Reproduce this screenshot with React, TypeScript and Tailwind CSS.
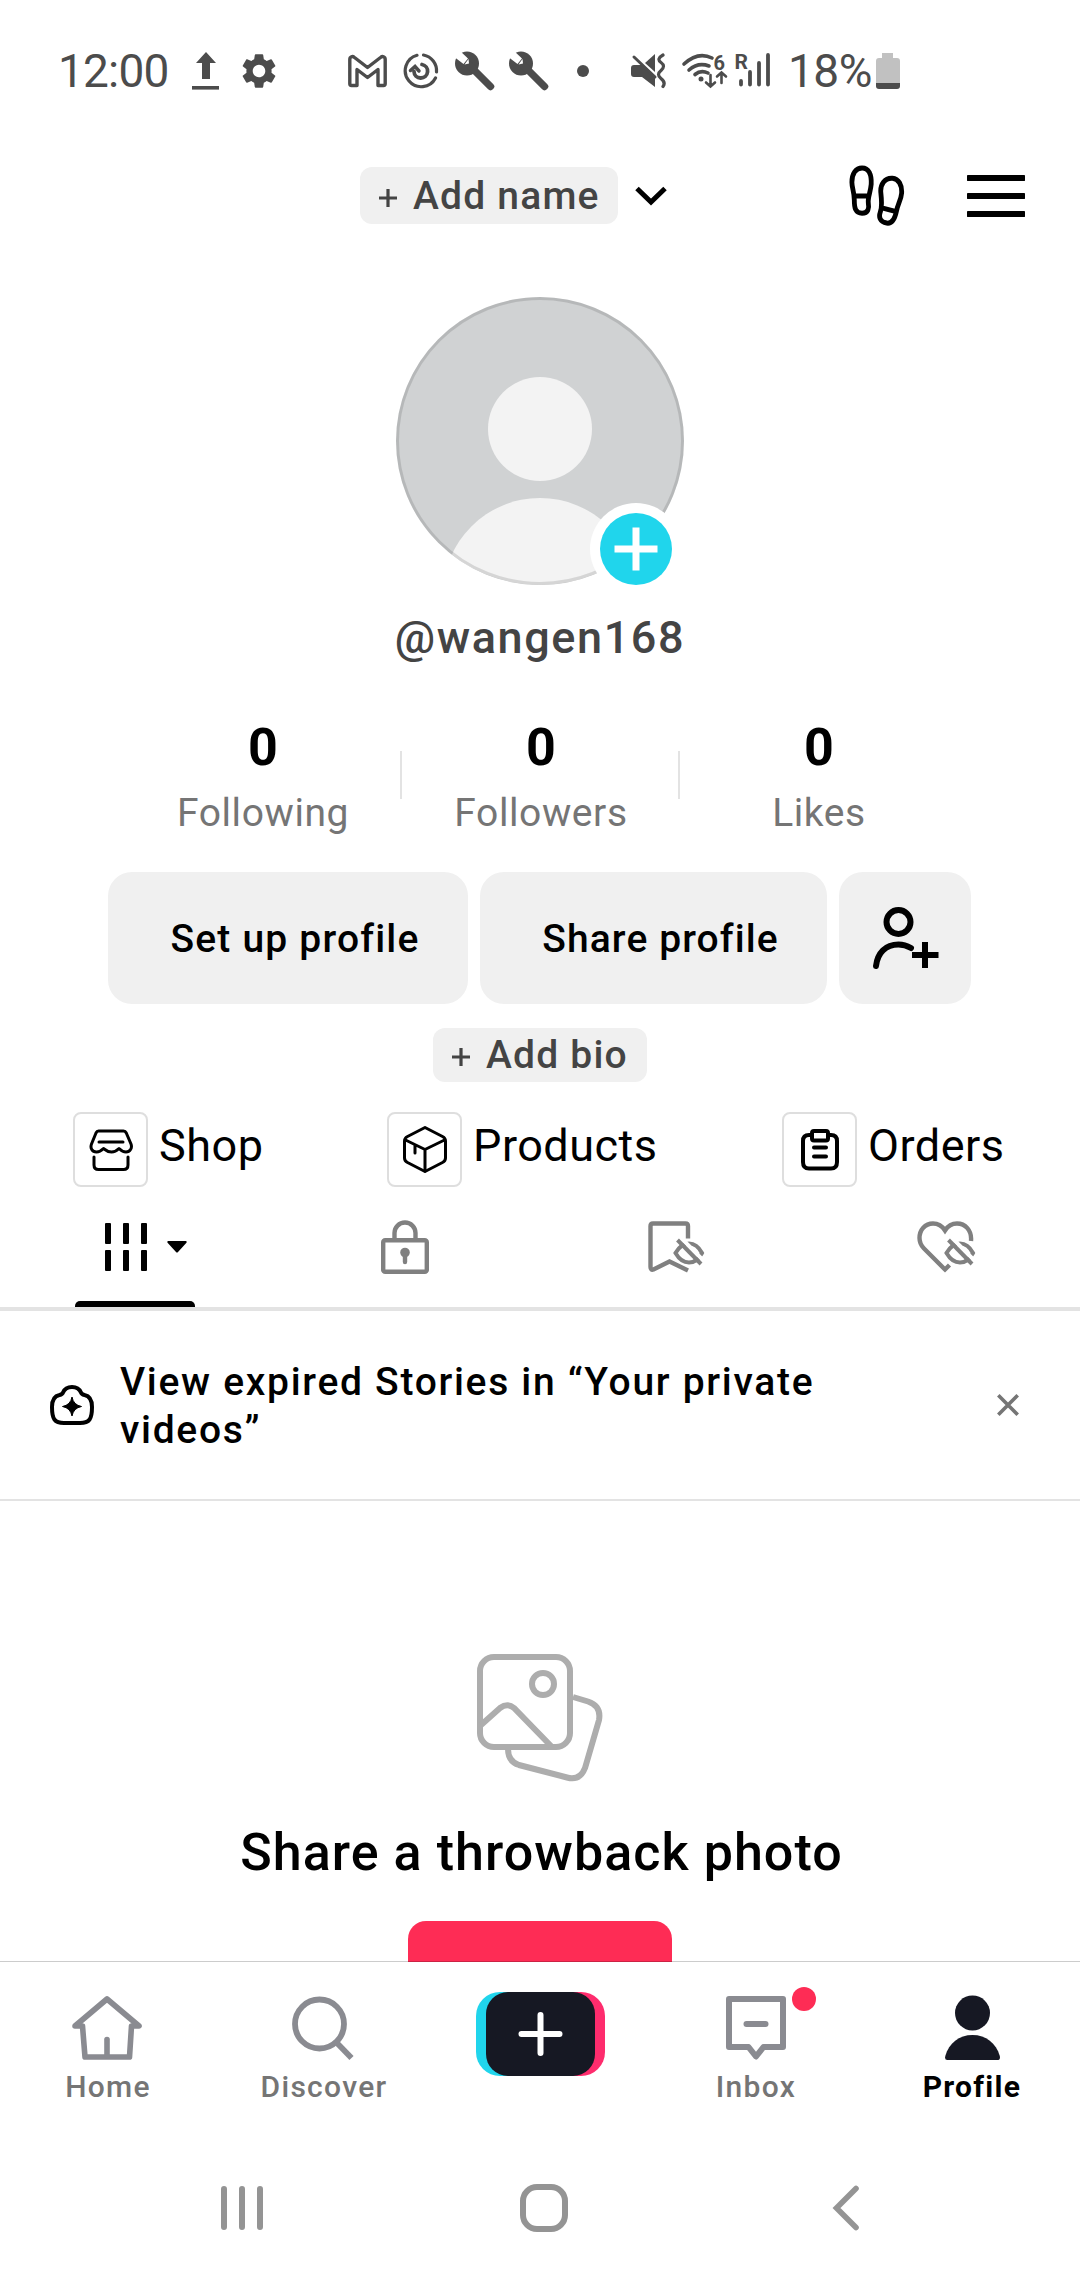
import type { ReactNode } from "react";
import { MdSettings } from "react-icons/md";

function WrenchIcon() {
  return (
    <svg width="40" height="40" viewBox="0 0 40 40">
      <circle cx="12" cy="12.5" r="12" fill="#4c4c4c" />
      <path d="M14 14 35.5 35.5" stroke="#4c4c4c" strokeWidth="7.4" strokeLinecap="round" />
      <path d="M-2 5 4 -1 13 7.5 8.5 13Z" fill="#fff" />
      <path d="M13.5 8 14 12.5 9.5 13.5Z" fill="#fff" />
    </svg>
  );
}

function StatusBar() {
  return (
    <div className="flex h-[141px] shrink-0 items-center pl-[58px] text-[46px] text-[#4c4c4c]">
      <span className="w-[134px] pt-px tracking-[-0.8px]">12:00</span>
      <svg width="28" height="38" viewBox="0 0 28 38" fill="#4c4c4c">
        <path d="M14 0 24 11H18V27H10V11H4Z" />
        <path d="M0 34h27v3.6H0z" />
      </svg>
      <MdSettings className="ml-[18px] size-[42px]" />
      <svg className="ml-[68px]" width="40" height="34" viewBox="0 0 40 34">
        <path
          d="M3.5 31.5c-1 0-1.7-.7-1.7-1.7V5.5C1.8 2.5 4.5 1.8 6.5 3.500L19.500 13.500 32.500 3.500c2-1.700 4.700-1 4.700 2v24.300c0 1-.7 1.700-1.700 1.700H30V15.500L19.500 23.500 9 15.500V31.500Z"
          fill="none"
          stroke="#4c4c4c"
          strokeWidth="3.400"
          strokeLinejoin="round"
        />
      </svg>
      <svg
        className="ml-[14px]"
        width="38"
        height="38"
        viewBox="0 0 38 38"
        fill="none"
        stroke="#4c4c4c"
        strokeWidth="3.200"
        strokeLinecap="round"
      >
        <path d="M15 3.300A16 16 0 1 0 33.500 26" />
        <path d="M21.500 3A16 16 0 0 1 34.500 20" />
        <path d="M20 12.500A6.800 6.800 0 1 1 12 19.500" strokeWidth="3.800" />
        <path d="M8.500 18.500 13 14.500 17 19" strokeWidth="3.500" />
      </svg>
      <span className="ml-[15px] flex gap-[14px]">
        <WrenchIcon />
        <WrenchIcon />
      </span>
      <span className="ml-[28px] size-3 rounded-full bg-[#4c4c4c]" />
      <svg className="ml-[42px]" width="36" height="36" viewBox="0 0 36 36" fill="#4c4c4c">
        <path d="M3 12h8L24 24v10L11 24H3c-2 0-3-1-3-3v-6c0-2 1-3 3-3Z" />
        <path d="M14 10 24 1v18Z" />
        <path d="M3 4 24 24" stroke="#4c4c4c" strokeWidth="3" strokeLinecap="round" />
        <path
          d="M32 2q-7 4-2 7.500t0 8q-5 4 0 8t2 8"
          fill="none"
          stroke="#4c4c4c"
          strokeWidth="3.200"
          strokeLinecap="round"
        />
      </svg>
      <svg
        className="ml-[15px] overflow-visible"
        width="94"
        height="40"
        viewBox="0 0 94 40"
        fill="none"
        stroke="#4c4c4c"
        strokeLinecap="round"
      >
        <path d="M2 13Q16 0 30 7" strokeWidth="3.600" />
        <path d="M7 19q9-8 20-4" strokeWidth="3.600" />
        <path d="M13 23.500q6-5 13-1.500" strokeWidth="3.600" />
        <circle cx="19" cy="28" r="2.500" fill="#4c4c4c" stroke="none" />
        <path d="M28.500 24v11m-4.500-3.500 4.500 4 4.500-4M39.500 32V22m-4.500 3.500 4.500-4 4.500 4" strokeWidth="2.600" />
        <path d="M59 30v3.500M68 21v12.500M77 12v21.500M86 4v29.500" strokeWidth="3.800" />
        <text x="31.500" y="18.800" fontSize="20" fontWeight="700" fill="#4c4c4c" stroke="none">
          6
        </text>
        <text x="52.500" y="17.700" fontSize="21" fontWeight="700" fill="#4c4c4c" stroke="none">
          R
        </text>
      </svg>
      <span className="ml-[12px] w-[85px] pt-px tracking-[-0.5px]">18%</span>
      <svg className="ml-[2px]" width="25" height="36" viewBox="0 0 25 36">
        <path d="M7 0h11v5h4c2 0 3 1 3 3v22H1V8c0-2 1-3 3-3h3z" fill="#c1c1c1" />
        <path d="M1 30h24v3c0 2-1 3-3 3H4c-2 0-3-1-3-3z" fill="#4c4c4c" />
      </svg>
    </div>
  );
}

function AddPill({ label, className }: { label: string; className: string }) {
  return (
    <span
      className={`flex items-center rounded-xl bg-[#f0f0f0] text-[39px] font-medium tracking-[1.2px] whitespace-nowrap text-[#444] ${className}`}
    >
      <svg className="mt-1" width="18" height="18" viewBox="0 0 18 18" stroke="#444" strokeWidth="3.200">
        <path d="M9 0v18M0 9h18" />
      </svg>
      <span className="ml-[16px] pt-px">{label}</span>
    </span>
  );
}

function Header() {
  return (
    <div className="flex h-[109px] shrink-0 items-center pl-[360px]">
      <AddPill label="Add name" className="h-[57px] w-[258px] pl-[19px]" />
      <svg className="ml-[16px]" width="34" height="20" viewBox="0 0 34 20" fill="none" stroke="#000" strokeWidth="5">
        <path d="M3 2.500 17 16 31 2.500" />
      </svg>
      <svg
        className="ml-[181px]"
        width="56"
        height="61"
        viewBox="0 0 58 62"
        preserveAspectRatio="none"
        fill="none"
        stroke="#000"
        strokeWidth="5"
        strokeLinejoin="round"
      >
        <path d="M13.500 3C7 3 3 9 3 17.500c0 6 2.500 10 2.500 18 0 8 1 13.500 8 13.500 6.500 0 7.500-5 6.500-10.500-.8-5 2.500-12 3-19C23.500 9.500 20.500 3 13.500 3ZM5.500 31.500h14.500" />
        <path d="M45 13.500c6.500.5 10 7 9.500 15-.5 7-4 11-5.500 19-1.500 7-4 12.500-10 11.500-7-1-8.500-6-6.500-11.500 2-5 1.500-10 .5-19C32 20 37 13 45 13.500ZM34 43.500l15 4" />
      </svg>
      <svg className="ml-[62px]" width="58" height="42" viewBox="0 0 58 42">
        <path d="M1.500 3h55M1.500 21h55M1.500 39h55" stroke="#000" strokeWidth="6" strokeLinecap="round" />
      </svg>
    </div>
  );
}

function Avatar() {
  return (
    <div className="relative mt-[47px] size-[288px] shrink-0 self-center">
      <svg width="288" height="288" viewBox="0 0 288 288">
        <clipPath id="avatar">
          <circle cx="144" cy="144" r="144" />
        </clipPath>
        <g clipPath="url(#avatar)">
          <path d="M0 0h288v288H0z" fill="#d0d2d3" />
          <circle cx="144" cy="132" r="52" fill="#f3f3f3" />
          <circle cx="144" cy="298" r="97" fill="#f3f3f3" />
        </g>
        <circle cx="144" cy="144" r="142.500" fill="none" stroke="#000" strokeOpacity=".12" strokeWidth="3" />
      </svg>
      <span className="absolute top-[206px] left-[194px] flex size-[92px] items-center justify-center rounded-full bg-white">
        <svg width="72" height="72" viewBox="0 0 72 72">
          <circle cx="36" cy="36" r="36" fill="#20d5ec" />
          <path d="M36 14.500v43M14.500 36h43" stroke="#fff" strokeWidth="7" />
        </svg>
      </span>
    </div>
  );
}

const stats = [
  { label: "Following", value: 0 },
  { label: "Followers", value: 0 },
  { label: "Likes", value: 0 },
];

function Stats() {
  return (
    <div className="mt-[53px] ml-[124px] flex">
      {stats.map((s, i) => (
        <div key={s.label} className="relative flex w-[278px] flex-col items-center">
          <span className="h-[54px] text-[52px] leading-[54px] font-bold">{s.value}</span>
          <span className="mt-[13px] h-[50px] text-[39px] leading-[50px] tracking-[0.6px] text-[#757575]">
            {s.label}
          </span>
          {i < 2 && <span className="absolute top-[30px] right-0 h-[48px] w-[2px] bg-[#e3e3e3]" />}
        </div>
      ))}
    </div>
  );
}

function Actions() {
  return (
    <div className="mt-[34px] ml-[108px] flex h-[132px] gap-[12px] text-[39px] font-medium whitespace-nowrap">
      <button className="w-[360px] rounded-[24px] bg-[#f0f0f0] pt-[2px] pl-[14px] tracking-[1.2px]">
        Set up profile
      </button>
      <button className="w-[347px] rounded-[24px] bg-[#f0f0f0] pt-[2px] pl-[14px] tracking-[1.1px]">
        Share profile
      </button>
      <button className="flex w-[132px] items-center justify-center rounded-[24px] bg-[#f0f0f0]">
        <svg width="67" height="62" viewBox="0 0 66 62" fill="none" stroke="#000" strokeWidth="6">
          <circle cx="26" cy="15" r="12" />
          <path d="M3.500 59C5 46 13 37.500 26 37.500c5 0 9 1.500 12.500 3.500" strokeLinecap="round" />
          <path d="M52.500 35v26M39.500 48H66" />
        </svg>
      </button>
    </div>
  );
}

function Shortcut({ label, icon, className }: { label: string; icon: ReactNode; className: string }) {
  return (
    <div className={`flex items-center ${className}`}>
      <span className="flex size-[75px] shrink-0 items-center justify-center rounded-lg border-2 border-[#dedede]">
        {icon}
      </span>
      <span className="ml-[11px] pb-[8px] text-[45px] tracking-[0.5px] whitespace-nowrap">{label}</span>
    </div>
  );
}

function Shortcuts() {
  return (
    <div className="mt-[30px] flex h-[75px] pl-[73px]">
      <Shortcut
        label="Shop"
        className="w-[314px]"
        icon={
          <svg width="44" height="42" viewBox="0 0 44 42" fill="none" stroke="#000" strokeWidth="3" strokeLinecap="round" strokeLinejoin="round">
            <path d="M9.500 2h25c1.500 0 2.200.7 2.800 2L42 15c1.500 4-1 8-5 8-3 0-5-1.500-7-3.500-2 2-3.500 3.500-7.500 3.500S17 21.500 14.500 19.500C12.500 21.500 10.500 23 7.500 23 3 23 1 19 2.500 15L7 4c.6-1.300 1.300-2 2.500-2Z" />
            <path d="M10 13h24M5 28v8c0 3 1.500 4.500 4.500 4.500h25c3 0 4.500-1.500 4.500-4.500v-8" />
          </svg>
        }
      />
      <Shortcut
        label="Products"
        className="w-[395px]"
        icon={
          <svg width="44" height="47" viewBox="0 0 44 47" fill="none" stroke="#000" strokeWidth="3" strokeLinecap="round" strokeLinejoin="round">
            <path d="M22 1.500 39.500 10.500Q42.500 12 42.500 15v17q0 3-3 4.500L22 45.500 4.500 36.500Q1.500 35 1.500 32V15q0-3 3-4.500Z" />
            <path d="M2.500 14 22 23.500 41.500 14M22 23.500V45M12 19v8" />
          </svg>
        }
      />
      <Shortcut
        label="Orders"
        className=""
        icon={
          <svg width="38" height="42" viewBox="0 0 38 42" fill="none" stroke="#000" strokeWidth="4" strokeLinejoin="round">
            <path d="M10 6H8Q2 6 2 12v21q0 6.500 6 6.500h22q6 0 6-6.500V12q0-6-6-6h-2" />
            <rect x="11" y="2" width="16" height="9.500" rx="2" />
            <path d="M13 18.500h12M13 27.500h12" strokeLinecap="round" />
          </svg>
        }
      />
    </div>
  );
}

/** Crossed-out eye that sits on the corner of the bookmark and heart tabs. */
function HiddenEye() {
  return (
    <g transform="translate(25 18)">
      <path d="M2.500 14Q8 4.500 16 4.500T29 14q-5 9.500-13 9.500T2.500 14Z" strokeWidth="4" />
      <path d="M7-2 32 23" stroke="#fff" strokeWidth="4" />
      <path d="M4.500 1 28 25" strokeWidth="4" />
    </g>
  );
}

function Tabs() {
  return (
    <div className="grid h-[124px] shrink-0 grid-cols-4 border-b-4 border-[#e3e3e3]">
      <div className="relative flex items-center pl-[105px]">
        <svg width="42" height="48" viewBox="0 0 42 48">
          <g fill="#000">
            <rect width="6" height="21" rx="1" />
            <rect x="18" width="6" height="21" rx="1" />
            <rect x="36" width="6" height="21" rx="1" />
            <rect y="27" width="6" height="21" rx="1" />
            <rect x="18" y="27" width="6" height="21" rx="1" />
            <rect x="36" y="27" width="6" height="21" rx="1" />
          </g>
        </svg>
        <svg className="ml-[20px]" width="20" height="12" viewBox="0 0 20 12">
          <path d="M1 0h18q1.500 1 0 2.200L11 11q-1 1-2 0L1 2.200Q-.5 1 1 0Z" />
        </svg>
        <span className="absolute bottom-0 left-[75px] h-[6px] w-[120px] rounded-t-[5px] bg-black" />
      </div>
      <div className="flex items-center justify-center">
        <svg width="48" height="54" viewBox="0 0 48 54" fill="none" stroke="#808080" strokeWidth="4.400">
          <rect x="2.200" y="20.200" width="43.600" height="31.600" rx="2" />
          <path d="M13.500 20v-7a10.500 10.500 0 0 1 21 0v7" />
          <circle cx="24" cy="32.500" r="4.800" fill="#808080" stroke="none" />
          <path d="M24 34v8" strokeLinecap="round" />
        </svg>
      </div>
      <div className="flex items-center justify-center pl-[2px]">
        <svg width="57" height="52" viewBox="0 0 57 52" fill="none" stroke="#808080" strokeWidth="4.400">
          <path d="M40 17.500V5q0-2.500-2.500-2.500H5Q2.500 2.500 2.500 5v41q0 3.500 3 2.500L21.500 40.500 40 49.500" />
          <HiddenEye />
        </svg>
      </div>
      <div className="flex items-center justify-center pl-[3px]">
        <svg width="59" height="52" viewBox="0 0 59 52" fill="none" stroke="#808080" strokeWidth="4.400">
          <path d="M54 20C55 9 48 2.500 40 2.500q-7.500 0-12 7-4.500-7-12-7C8 2.500 2.500 9 2.500 17q0 6 4.500 10.500L28 48.500l4.500-4.500" />
          <g transform="translate(2 0)">
            <HiddenEye />
          </g>
        </svg>
      </div>
    </div>
  );
}

function StoriesNotice() {
  return (
    <div className="flex h-[190px] shrink-0 items-center border-b-2 border-[#e3e3e3] pl-[50px]">
      <svg width="44" height="40" viewBox="0 0 44 40">
        <path
          d="M22 2c5 0 7.500 2 9 5.500.5 1.500 1.500 2 3.500 2.500 5 1 7.500 4.500 7.500 12 0 12-2.500 16-12 16H14C4.500 38 2 34 2 22c0-7.500 2.500-11 7.500-12 2-.5 3-1 3.500-2.500C14.500 4 17 2 22 2Z"
          fill="none"
          stroke="#000"
          strokeWidth="4"
        />
        <path d="M22 12q1.500 8 9.500 9.500Q23.500 23 22 31q-1.500-8-9.500-9.500Q20.500 20 22 12Z" stroke="#000" strokeLinejoin="round" />
      </svg>
      <p className="ml-[26px] w-[721px] pt-[2px] text-[39px] leading-[48px] font-medium tracking-[1.7px] whitespace-nowrap">
        View expired Stories in “Your private
        <br />
        videos”
      </p>
      <svg className="ml-[156px]" width="22" height="22" viewBox="0 0 22 22" stroke="#757575" strokeWidth="3.600">
        <path d="M1.300 1.300 20.700 20.700M20.700 1.300 1.300 20.700" />
      </svg>
    </div>
  );
}

function EmptyState() {
  return (
    <div className="flex h-[461px] shrink-0 flex-col items-center overflow-hidden pt-[153px]">
      <svg className="shrink-0" width="126" height="128" viewBox="0 0 126 128" fill="none" stroke="#adadad" strokeWidth="6">
        <rect x="3" y="3" width="90" height="90" rx="14" />
        <circle cx="66" cy="30" r="11" />
        <path d="M4 71 23 54q7.500-5.500 14 0L74 92" />
        <path d="M96 43 111 47.500Q124.500 52 122 66L108 114Q103 127 90 123.500L42 111Q31 107.500 31 95" />
      </svg>
      <h2 className="mt-[39px] h-[64px] shrink-0 pl-[3px] text-[52px] leading-[64px] font-medium tracking-[1.05px] whitespace-nowrap">
        Share a throwback photo
      </h2>
      <div className="mt-[36px] h-[120px] w-[264px] shrink-0 rounded-[18px] bg-[#fe2c55]" />
    </div>
  );
}

function NavItem({ label, icon, className = "" }: { label: string; icon: ReactNode; className?: string }) {
  return (
    <div className="flex flex-col items-center pt-[28px]">
      <span className="relative flex h-[75px] items-center">{icon}</span>
      <span className={`h-[44px] text-[30px] leading-[44px] tracking-[1.3px] ${className}`}>{label}</span>
    </div>
  );
}

function BottomNav() {
  return (
    <nav className="-mt-px grid h-[177px] shrink-0 grid-cols-5 border-t border-black/20 font-medium text-[#757575]">
      <NavItem
        label="Home"
        icon={
          <svg className="mr-[2px]" width="70" height="66" viewBox="0 0 70 66" fill="none" stroke="#8a8b91" strokeWidth="5.600" strokeLinejoin="round" strokeLinecap="round">
            <path d="M10.500 31H3L35 4 67 31H59.500L57.500 62H13L10.500 31" />
            <path d="M35 44.500V61" />
          </svg>
        }
      />
      <NavItem
        label="Discover"
        icon={
          <svg className="mr-[2px]" width="62" height="66" viewBox="0 0 62 66" fill="none" stroke="#8a8b91" strokeWidth="5.800">
            <circle cx="27.500" cy="29" r="24.500" />
            <path d="M44 47 59.500 63" />
          </svg>
        }
      />
      <div className="flex justify-center pt-[30px]">
        <svg width="129" height="84" viewBox="0 0 129 84">
          <rect width="100" height="84" rx="24" fill="#20d5ec" />
          <rect x="29" width="100" height="84" rx="24" fill="#fe2c6d" />
          <rect x="10" width="109" height="84" rx="22" fill="#161823" />
          <path d="M64.500 23v38M45.500 42h38" stroke="#fff" strokeWidth="6" strokeLinecap="round" />
        </svg>
      </div>
      <NavItem
        label="Inbox"
        icon={
          <>
            <svg width="60" height="64" viewBox="0 0 60 64" fill="none" stroke="#8a8b91" strokeWidth="6" strokeLinejoin="round">
              <path d="M3 3h54v48H37.500L30 60.500 22.500 51H3Z" />
              <path d="M20.500 28h19" strokeLinecap="round" />
            </svg>
            <span className="absolute -top-[3px] left-[66px] size-[24px] rounded-full bg-[#fe2c55]" />
          </>
        }
      />
      <NavItem
        label="Profile"
        className="font-bold text-black"
        icon={
          <svg width="55" height="66" viewBox="0 0 55 66" fill="#161823">
            <circle cx="27.500" cy="18" r="17.500" />
            <path d="M27.500 40C41 40 51 48 54.800 61q.8 4-2.500 4h-50q-3 0-2-4C4 48 14 40 27.500 40Z" />
          </svg>
        }
      />
    </nav>
  );
}

function SystemNav() {
  return (
    <div className="flex h-[140px] shrink-0 items-center pl-[221px]">
      <svg width="42" height="46" viewBox="0 0 42 46" stroke="#949494" strokeWidth="6" strokeLinecap="round">
        <path d="M3 4v38M21 4v38M39 4v38" />
      </svg>
      <span className="ml-[257px] size-[48px] rounded-[17px] border-[6px] border-[#949494]" />
      <svg className="ml-[264px]" width="28" height="46" viewBox="0 0 28 46" fill="none" stroke="#949494" strokeWidth="5.600" strokeLinecap="round">
        <path d="M24 3.500 4.500 23 24 42.500" />
      </svg>
    </div>
  );
}

export default function App() {
  return (
    <div className="flex h-[2280px] w-[1080px] flex-col overflow-hidden bg-white font-['Roboto',sans-serif] text-black">
      <StatusBar />
      <Header />
      <Avatar />
      <p className="mt-[23px] h-[60px] text-center text-[45px] leading-[60px] font-medium tracking-[1.6px] text-[#444]">
        @wangen168
      </p>
      <Stats />
      <Actions />
      <AddPill label="Add bio" className="mt-[24px] h-[54px] w-[214px] shrink-0 self-center pl-[19px]" />
      <Shortcuts />
      <Tabs />
      <StoriesNotice />
      <EmptyState />
      <BottomNav />
      <SystemNav />
    </div>
  );
}
